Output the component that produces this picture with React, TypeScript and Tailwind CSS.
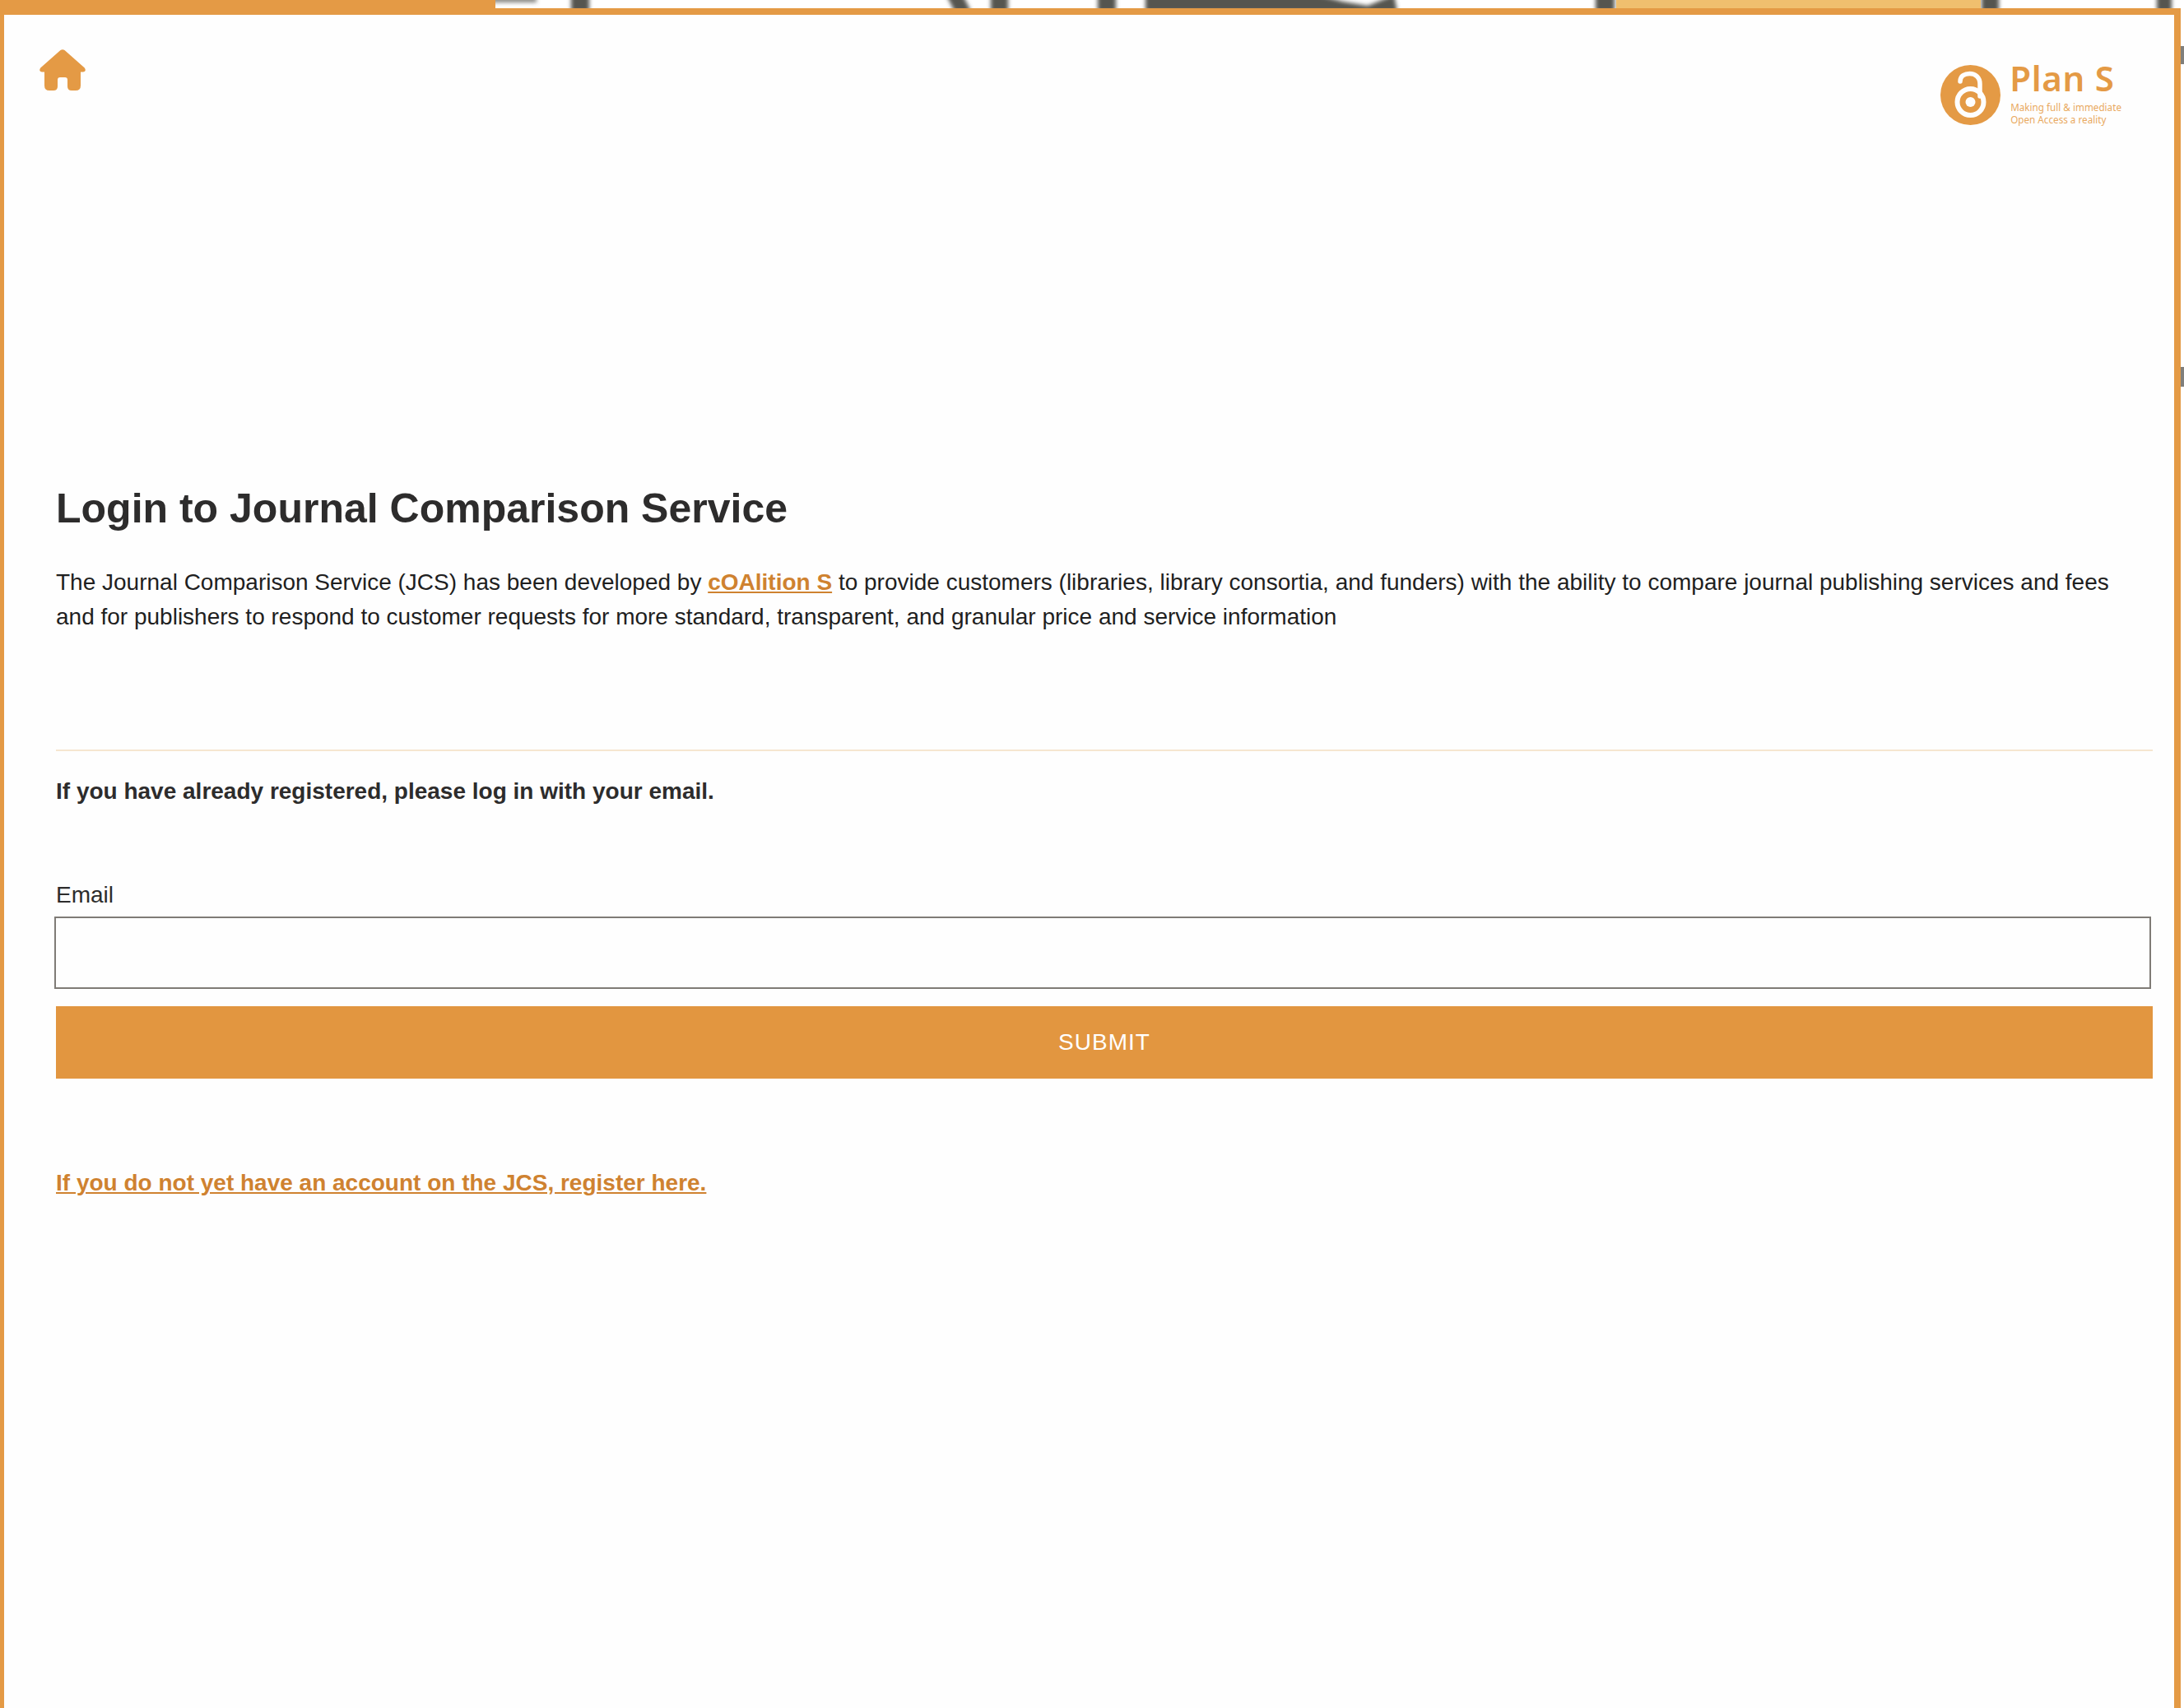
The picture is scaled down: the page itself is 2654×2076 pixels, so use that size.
function HomeIcon() {
  return (
    <svg viewBox="0 0 56 50" className="w-[56px] h-[50px]" fill="#e49a45">
      <path d="M25.5 1 Q28 -0.6 30.5 1 L54.8 22.5 Q57.5 27 53 27.5 L50 27.5 L50 44 Q50 50 44 50 L39 50 Q34 50 34 45 L34 37 Q34 34 31 34 L25 34 Q22 34 22 37 L22 45 Q22 50 17 50 L12 50 Q6 50 6 44 L6 27.5 L3 27.5 Q-1.5 27 1.2 22.5 Z" />
    </svg>
  );
}

function PlanSLogo() {
  return (
    <div className="flex items-start gap-[11px]">
      <svg viewBox="0 0 73 73" className="w-[73px] h-[73px] mt-[12px]">
        <circle cx="36.5" cy="36.5" r="36.5" fill="#e49a45" />
        <circle cx="36.5" cy="45" r="16" fill="none" stroke="#fefefe" strokeWidth="6" />
        <circle cx="36.5" cy="45" r="6" fill="#fefefe" />
        <path d="M24 20 C24 13 30 10.5 35.5 10.5 C42.5 10.5 48 15 48 23 L48 38" fill="none" stroke="#fefefe" strokeWidth="5.5" strokeLinecap="round" />
      </svg>
      <div className="flex flex-col font-['Noto_Sans',sans-serif] text-[#e49a45]">
        <span className="text-[42px] leading-[56px] font-semibold tracking-[0.7px]">Plan S</span>
        <span className="text-[11.7px] leading-[15px] ml-[1px] text-[#e9a95f]">Making full &amp; immediate</span>
        <span className="text-[11.7px] leading-[15px] ml-[1px] text-[#e9a95f]">Open Access a reality</span>
      </div>
    </div>
  );
}

// the strip of the page behind the frame, a blurred picture
function BackgroundStrip() {
  return (
    <div className="flex h-[10px] w-full">
      <div className="w-[602px] bg-[#e49a45]" />
      <svg viewBox="0 0 2052 10" className="w-[2052px] h-[10px] bg-white">
        <defs>
          <filter id="soft" x="-20%" y="-100%" width="140%" height="300%">
            <feGaussianBlur stdDeviation="2.5" />
          </filter>
        </defs>
        <g fill="#555450" filter="url(#soft)">
          <rect x="-10" y="-4" width="60" height="7" opacity="0.7" />
          <rect x="92" y="-6" width="22" height="20" />
          <path d="M548 -6 L568 -6 L578 14 L558 14 Z" />
          <rect x="602" y="-6" width="21" height="20" />
          <rect x="732" y="-6" width="22" height="20" />
          <path d="M790 -6 L1000 -6 L1030 2 L1060 7 L1092 -6 L1096 14 L790 14 Z" />
          <rect x="1337" y="-6" width="23" height="20" />
          <rect x="1806" y="-6" width="21" height="20" />
          <rect x="2019" y="-6" width="18" height="20" />
        </g>
        <rect x="1362" y="0" width="443" height="10" fill="#f0bf6e" />
      </svg>
    </div>
  );
}

export default function App() {
  return (
    <div className="flex flex-col min-h-[2076px] w-[2654px] overflow-hidden bg-white font-['Liberation_Sans',Arial,sans-serif]">
      <BackgroundStrip />
      <div className="flex flex-1">
        <div className="flex-1 flex flex-col border-t-[8px] border-l-[5px] border-r-[8px] border-[#e49a45] bg-[#fefefe] pl-[63px] pr-[26px]">
          <div className="flex justify-between -ml-[20px] mr-[38px] h-[570px] pt-[42px]">
            <a href="#" aria-label="Home" className="block h-[50px]">
              <HomeIcon />
            </a>
            <div className="pt-[7px]">
              <PlanSLogo />
            </div>
          </div>

          <h1 className="text-[50px] leading-[60px] font-bold text-[#2d2c2c]">Login to Journal Comparison Service</h1>

          <p className="mt-[39px] text-[28px] leading-[42px] text-[#1f1f1f]">
            The Journal Comparison Service (JCS) has been developed by{' '}
            <a href="#" className="font-bold text-[#cf8230] underline">cOAlition S</a>{' '}
            to provide customers (libraries, library consortia, and funders) with the ability to compare journal publishing services and fees and for publishers to respond to customer requests for more standard, transparent, and granular price and service information
          </p>

          <div className="mt-[140px] h-[2px] bg-[#f6e6d0]" />

          <p className="mt-[28px] text-[28px] leading-[42px] font-bold text-[#2d2c2c]">If you have already registered, please log in with your email.</p>

          <form className="mt-[84px] flex flex-col">
            <label htmlFor="email" className="text-[28px] leading-[42px] text-[#2d2c2c]">Email</label>
            <input id="email" type="email" className="mt-[5px] -ml-[2px] mr-[2px] h-[88px] border-2 border-[#7f7b76] bg-[#fefefe]" />
            <button type="button" className="mt-[21px] h-[88px] bg-[#e29640] text-[28px] tracking-[1px] text-white">SUBMIT</button>
          </form>

          <a href="#" className="mt-[106px] text-[28px] leading-[42px] font-bold text-[#cf8230] underline">If you do not yet have an account on the JCS, register here.</a>
        </div>
        <svg viewBox="0 0 4 500" className="w-[4px] h-[500px]">
          <rect x="0" y="46" width="4" height="22" fill="#555450" opacity="0.75" />
          <rect x="0" y="436" width="4" height="24" fill="#555450" opacity="0.75" />
        </svg>
      </div>
    </div>
  );
}
